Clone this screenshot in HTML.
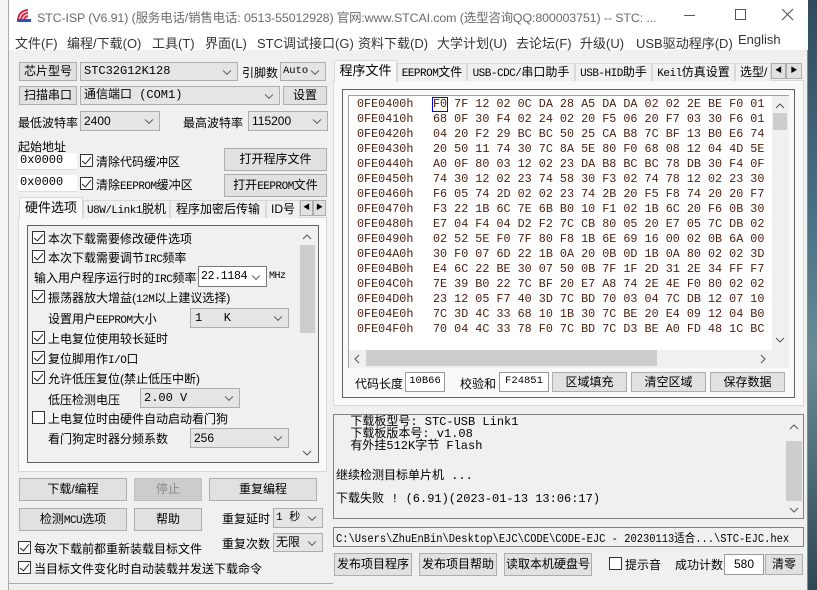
<!DOCTYPE html>
<html><head><meta charset="utf-8"><style>
*{box-sizing:border-box;margin:0;padding:0}
body{width:817px;height:590px;overflow:hidden;position:relative;background:#fff;font-family:"Liberation Sans","Noto Sans CJK SC",sans-serif;font-size:12px;color:#000}
.a{position:absolute;white-space:nowrap}
.win{position:absolute;left:8px;top:0;width:800px;height:590px;background:#f0f0f0;border-left:1px solid #aaa;border-right:1px solid #888}
.btn{position:absolute;background:#e1e1e1;border:1px solid #adadad;text-align:center;font-size:12px;white-space:nowrap}
.cb{position:absolute;background:#e5e5e5;border:1px solid #adadad;font-family:"Liberation Mono","Noto Sans CJK SC",monospace;font-size:12px;padding-left:3px;white-space:nowrap;overflow:hidden}
.cb::after{content:"";position:absolute;right:7px;top:50%;width:5px;height:5px;border-right:1px solid #555;border-bottom:1px solid #555;transform:translateY(-70%) rotate(45deg)}
.wcb{background:#fff;border-color:#7a7a7a}
.ed{position:absolute;background:#fff;border:1px solid #7a7a7a;font-family:"Liberation Mono",monospace;font-size:12px;padding-left:2px;white-space:nowrap}
.ck{position:absolute;width:13px;height:13px;border:1px solid #333;background:#fff}
.ck.on::after{content:"";position:absolute;left:3px;top:0px;width:4px;height:8px;border-right:1.5px solid #222;border-bottom:1.5px solid #222;transform:rotate(40deg)}
.tab{position:absolute;background:#f0f0f0;border:1px solid #d9d9d9;border-bottom:none;text-align:center;font-size:12px;white-space:nowrap;overflow:hidden}
.hex{position:absolute;font-family:"Liberation Mono",monospace;font-size:11.75px;color:#4a2010;white-space:pre;letter-spacing:0}
.lbl{position:absolute;font-size:12px;white-space:nowrap}
.mono{font-family:"Liberation Mono","Noto Sans CJK SC",monospace}
.m{font-family:"Liberation Mono",monospace;font-size:11px;letter-spacing:-0.5px}
</style></head><body>
<div class="a" style="left:0;top:0;width:8px;height:590px;background:#f4f4f4"></div>
<div class="a" style="left:808px;top:0;width:9px;height:590px;background:linear-gradient(#2f4a5e,#4d7488 40%,#6a8c98 60%,#2e4756)"></div>
<div class="win">
 <div class="a" style="left:0;top:0;width:799px;height:50px;background:#fff"></div>
</div>
<!-- title -->
<svg class="a" style="left:16px;top:7px" width="16" height="16" viewBox="0 0 16 16"><path d="M2 14 Q2 4 12 3" stroke="#e0284a" stroke-width="2" fill="none"/><path d="M5 14 Q5 7 12 6" stroke="#e0284a" stroke-width="2" fill="none"/><path d="M8 14 Q8 10 12 9" stroke="#e0284a" stroke-width="2" fill="none"/><rect x="1" y="12" width="14" height="3" fill="#2a52c0"/></svg>
<div class="a" style="left:37px;top:8px;font-size:12.4px;color:#6a6a6a;letter-spacing:-0.1px">STC-ISP (V6.91) (服务电话/销售电话: 0513-55012928) 官网:www.STCAI.com (选型咨询QQ:800003751) -- STC: ...</div>
<div class="a" style="left:684px;top:15px;width:11px;height:1px;background:#555"></div>
<div class="a" style="left:735px;top:9px;width:11px;height:11px;border:1px solid #555"></div>
<svg class="a" style="left:781px;top:8px" width="13" height="13"><path d="M1 1L12 12M12 1L1 12" stroke="#555" stroke-width="1.1"/></svg>
<!-- menu -->
<div class="a" style="left:15px;top:33px;font-size:13px;color:#333">
<span style="position:absolute;left:0">文件(F)</span><span style="position:absolute;left:52px">编程/下载(O)</span><span style="position:absolute;left:137px">工具(T)</span><span style="position:absolute;left:190px">界面(L)</span><span style="position:absolute;left:242px">STC调试接口(G)</span><span style="position:absolute;left:343px">资料下载(D)</span><span style="position:absolute;left:422px">大学计划(U)</span><span style="position:absolute;left:501px">去论坛(F)</span><span style="position:absolute;left:565px">升级(U)</span><span style="position:absolute;left:621px">USB驱动程序(D)</span><span style="position:absolute;left:723px;top:-1px">English</span></div>

<!-- left top -->
<div class="btn" style="left:19px;top:62px;width:58px;height:19px;line-height:17px">芯片型号</div>
<div class="cb" style="left:80px;top:62px;width:158px;height:19px;line-height:17px">STC32G12K128</div>
<div class="lbl" style="left:242px;top:64px">引脚数</div>
<div class="cb" style="left:280px;top:62px;width:46px;height:19px;line-height:17px;font-size:10.5px;padding-left:2px">Auto</div>
<div class="btn" style="left:19px;top:86px;width:58px;height:19px;line-height:17px">扫描串口</div>
<div class="cb" style="left:80px;top:86px;width:200px;height:19px;line-height:17px">通信端口 (COM1)</div>
<div class="btn" style="left:283px;top:86px;width:44px;height:19px;line-height:17px">设置</div>
<div class="lbl" style="left:18px;top:114px">最低波特率</div>
<div class="cb" style="left:80px;top:111px;width:80px;height:20px;line-height:18px;font-family:'Liberation Sans'">2400</div>
<div class="lbl" style="left:183px;top:114px">最高波特率</div>
<div class="cb" style="left:248px;top:111px;width:80px;height:20px;line-height:18px;font-family:'Liberation Sans'">115200</div>
<div class="lbl" style="left:18px;top:138px">起始地址</div>
<div class="ed" style="left:18px;top:153px;width:59px;height:17px;line-height:15px;border:none;border-bottom:1px solid #ddd">0x0000</div>
<div class="ck on" style="left:80px;top:154px"></div><div class="lbl" style="left:96px;top:153px">清除代码缓冲区</div>
<div class="btn" style="left:224px;top:148px;width:103px;height:23px;line-height:21px">打开程序文件</div>
<div class="ed" style="left:18px;top:175px;width:59px;height:17px;line-height:15px;border:none;border-bottom:1px solid #ddd">0x0000</div>
<div class="ck on" style="left:80px;top:177px"></div><div class="lbl" style="left:96px;top:176px">清除<span class="m">EEPROM</span>缓冲区</div>
<div class="btn" style="left:224px;top:174px;width:103px;height:23px;line-height:21px">打开<span class="m">EEPROM</span>文件</div>

<!-- left tabs -->
<div class="a" style="left:18px;top:217px;width:309px;height:255px;border:1px solid #d9d9d9;background:#f9f9f9"></div>
<div class="tab" style="left:83px;top:200px;width:87px;height:18px;line-height:17px"><span class="m">U8W/Link1</span>脱机</div>
<div class="tab" style="left:170px;top:200px;width:96px;height:18px;line-height:17px">程序加密后传输</div>
<div class="tab" style="left:266px;top:200px;width:34px;height:18px;line-height:17px;text-align:left;padding-left:4px">ID号</div>
<div class="tab" style="left:19px;top:197px;width:64px;height:22px;line-height:20px;background:#f9f9f9;font-size:13px">硬件选项</div>
<div class="btn" style="left:300px;top:200px;width:13px;height:16px;font-size:7px;line-height:14px">◀</div>
<div class="btn" style="left:313px;top:200px;width:13px;height:16px;font-size:7px;line-height:14px">▶</div>
<div class="a" style="left:27px;top:225px;width:292px;height:238px;border:1px solid #646464;background:#f0f0f0"></div>
<div class="a" style="left:299px;top:226px;width:19px;height:236px;background:#f0f0f0"></div>
<div class="a" style="left:300px;top:245px;width:15px;height:88px;background:#cdcdcd"></div>
<svg class="a" style="left:302px;top:234px" width="10" height="6"><path d="M1 5L5 1L9 5" stroke="#555" fill="none"/></svg>
<svg class="a" style="left:302px;top:450px" width="10" height="6"><path d="M1 1L5 5L9 1" stroke="#555" fill="none"/></svg>
<div class="ck on" style="left:32px;top:231px"></div><div class="lbl" style="left:48px;top:230px">本次下载需要修改硬件选项</div>
<div class="ck on" style="left:32px;top:250px"></div><div class="lbl" style="left:48px;top:249px">本次下载需要调节<span class="m">IRC</span>频率</div>
<div class="lbl" style="left:34px;top:269px">输入用户程序运行时的<span class="m">IRC</span>频率</div>
<div class="cb wcb" style="left:198px;top:266px;width:69px;height:21px;line-height:19px;font-size:11.5px;padding-left:2px;letter-spacing:-0.3px">22.1184</div>
<div class="lbl m" style="left:269px;top:271px;font-size:10px">MHz</div>
<div class="ck on" style="left:32px;top:290px"></div><div class="lbl" style="left:48px;top:289px">振荡器放大增益(<span class="m">12M</span>以上建议选择)</div>
<div class="lbl" style="left:48px;top:310px">设置用户<span class="m">EEPROM</span>大小</div>
<div class="cb" style="left:190px;top:308px;width:99px;height:20px;line-height:18px;padding-left:4px">1&nbsp;&nbsp;&nbsp;K</div>
<div class="ck on" style="left:32px;top:331px"></div><div class="lbl" style="left:48px;top:330px">上电复位使用较长延时</div>
<div class="ck on" style="left:32px;top:351px"></div><div class="lbl" style="left:48px;top:350px">复位脚用作<span class="m">I/O</span>口</div>
<div class="ck on" style="left:32px;top:371px"></div><div class="lbl" style="left:48px;top:370px">允许低压复位(禁止低压中断)</div>
<div class="lbl" style="left:48px;top:391px">低压检测电压</div>
<div class="cb" style="left:140px;top:388px;width:100px;height:20px;line-height:18px">2.00 V</div>
<div class="ck" style="left:32px;top:411px"></div><div class="lbl" style="left:48px;top:410px">上电复位时由硬件自动启动看门狗</div>
<div class="lbl" style="left:48px;top:430px">看门狗定时器分频系数</div>
<div class="cb" style="left:190px;top:428px;width:99px;height:20px;line-height:18px;font-family:'Liberation Sans'">256</div>

<div class="btn" style="left:19px;top:478px;width:108px;height:23px;line-height:21px">下载/编程</div>
<div class="btn" style="left:134px;top:478px;width:68px;height:23px;line-height:21px;background:#ccc;border-color:#bfbfbf;color:#8a8a8a">停止</div>
<div class="btn" style="left:209px;top:478px;width:108px;height:23px;line-height:21px">重复编程</div>
<div class="btn" style="left:19px;top:508px;width:108px;height:23px;line-height:21px">检测<span class="m">MCU</span>选项</div>
<div class="btn" style="left:134px;top:508px;width:68px;height:23px;line-height:21px">帮助</div>
<div class="lbl" style="left:222px;top:510px">重复延时</div>
<div class="cb" style="left:273px;top:508px;width:50px;height:20px;line-height:18px;font-size:11px;padding-left:2px">1 秒</div>
<div class="lbl" style="left:222px;top:535px">重复次数</div>
<div class="cb" style="left:273px;top:533px;width:50px;height:19px;line-height:17px;font-family:'Liberation Sans','Noto Sans CJK SC';padding-left:2px">无限</div>
<div class="ck on" style="left:18px;top:541px"></div><div class="lbl" style="left:34px;top:540px">每次下载前都重新装载目标文件</div>
<div class="ck on" style="left:18px;top:561px"></div><div class="lbl" style="left:34px;top:560px">当目标文件变化时自动装载并发送下载命令</div>
<div class="a" style="left:8px;top:583px;width:325px;height:1px;background:#aaa"></div>

<!-- right tabs -->
<div class="a" style="left:333px;top:80px;width:471px;height:326px;background:#f9f9f9;border:1px solid #d9d9d9"></div>
<div class="tab" style="left:397px;top:63px;width:70px;height:18px;line-height:17px"><span class="m">EEPROM</span>文件</div>
<div class="tab" style="left:467px;top:63px;width:108px;height:18px;line-height:17px"><span class="m">USB-CDC/</span>串口助手</div>
<div class="tab" style="left:575px;top:63px;width:77px;height:18px;line-height:17px"><span class="m">USB-HID</span>助手</div>
<div class="tab" style="left:652px;top:63px;width:83px;height:18px;line-height:17px"><span class="m">Keil</span>仿真设置</div>
<div class="tab" style="left:735px;top:63px;width:36px;height:18px;line-height:17px;text-align:left;padding-left:4px">选型/</div>
<div class="tab" style="left:334px;top:60px;width:63px;height:22px;line-height:20px;background:#f9f9f9;font-size:13px">程序文件</div>
<div class="btn" style="left:771px;top:63px;width:15px;height:16px;font-size:7px;line-height:14px">◀</div>
<div class="btn" style="left:786px;top:63px;width:16px;height:16px;font-size:7px;line-height:14px">▶</div>
<div class="a" style="left:342px;top:89px;width:453px;height:309px;border:1px solid #646464"></div>
<div class="a" style="left:348px;top:95px;width:441px;height:273px;background:#fff;border-top:1px solid #a0a0a0;border-left:1px solid #a0a0a0"></div>
<div class="a" style="left:772px;top:96px;width:17px;height:272px;background:#f0f0f0"></div>
<div class="a" style="left:773px;top:113px;width:14px;height:17px;background:#cdcdcd"></div>
<svg class="a" style="left:775px;top:103px" width="10" height="6"><path d="M1 5L5 1L9 5" stroke="#555" fill="none"/></svg>
<svg class="a" style="left:775px;top:337px" width="10" height="6"><path d="M1 1L5 5L9 1" stroke="#555" fill="none"/></svg>
<div class="a" style="left:349px;top:350px;width:423px;height:18px;background:#f0f0f0"></div>
<div class="a" style="left:366px;top:350px;width:291px;height:16px;background:#cdcdcd"></div>
<svg class="a" style="left:354px;top:354px" width="6" height="10"><path d="M5 1L1 5L5 9" stroke="#555" fill="none"/></svg>
<svg class="a" style="left:760px;top:354px" width="6" height="10"><path d="M1 1L5 5L1 9" stroke="#555" fill="none"/></svg>
<div class="a" style="left:432px;top:97px;width:16px;height:15px;border:1px solid #0000ff"></div>
<div class="hex" style="left:357px;top:97px;line-height:15px">0FE0400h
0FE0410h
0FE0420h
0FE0430h
0FE0440h
0FE0450h
0FE0460h
0FE0470h
0FE0480h
0FE0490h
0FE04A0h
0FE04B0h
0FE04C0h
0FE04D0h
0FE04E0h
0FE04F0h</div>
<div class="hex" style="left:433px;top:97px;line-height:15px;word-spacing:0">F0 7F 12 02 0C DA 28 A5 DA DA 02 02 2E BE F0 01
68 0F 30 F4 02 24 02 20 F5 06 20 F7 03 30 F6 01
04 20 F2 29 BC BC 50 25 CA B8 7C BF 13 B0 E6 74
20 50 11 74 30 7C 8A 5E 80 F0 68 08 12 04 4D 5E
A0 0F 80 03 12 02 23 DA B8 BC BC 78 DB 30 F4 0F
74 30 12 02 23 74 58 30 F3 02 74 78 12 02 23 30
F6 05 74 2D 02 02 23 74 2B 20 F5 F8 74 20 20 F7
F3 22 1B 6C 7E 6B B0 10 F1 02 1B 6C 20 F6 0B 30
E7 04 F4 04 D2 F2 7C CB 80 05 20 E7 05 7C DB 02
02 52 5E F0 7F 80 F8 1B 6E 69 16 00 02 0B 6A 00
30 F0 07 6D 22 1B 0A 20 0B 0D 1B 0A 80 02 02 3D
E4 6C 22 BE 30 07 50 0B 7F 1F 2D 31 2E 34 FF F7
7E 39 B0 22 7C BF 20 E7 A8 74 2E 4E F0 80 02 02
23 12 05 F7 40 3D 7C BD 70 03 04 7C DB 12 07 10
7C 3D 4C 33 68 10 1B 30 7C BE 20 E4 09 12 04 B0
70 04 4C 33 78 F0 7C BD 7C D3 BE A0 FD 48 1C BC</div>
<div class="lbl" style="left:355px;top:375px">代码长度</div>
<div class="ed" style="left:405px;top:372px;width:40px;height:20px;line-height:17px;font-size:10.5px;text-align:center;border-color:#999;padding:0">10B66</div>
<div class="lbl" style="left:460px;top:375px">校验和</div>
<div class="ed" style="left:499px;top:372px;width:50px;height:20px;line-height:17px;font-size:10.5px;text-align:center;border-color:#999;padding:0">F24851</div>
<div class="btn" style="left:552px;top:372px;width:75px;height:20px;line-height:18px">区域填充</div>
<div class="btn" style="left:631px;top:372px;width:75px;height:20px;line-height:18px">清空区域</div>
<div class="btn" style="left:710px;top:372px;width:75px;height:20px;line-height:18px">保存数据</div>

<!-- log -->
<div class="a" style="left:333px;top:414px;width:471px;height:105px;border:1px solid #828282;background:#f0f0f0"></div>
<div class="a" style="left:786px;top:415px;width:17px;height:103px;background:#f0f0f0"></div>
<div class="a" style="left:786px;top:441px;width:16px;height:60px;background:#cdcdcd"></div>
<svg class="a" style="left:789px;top:424px" width="10" height="6"><path d="M1 5L5 1L9 5" stroke="#555" fill="none"/></svg>
<svg class="a" style="left:789px;top:507px" width="10" height="6"><path d="M1 1L5 5L9 1" stroke="#555" fill="none"/></svg>
<div class="a mono" style="left:336px;top:416px;font-size:12px;line-height:12px">&nbsp;&nbsp;下载板型号: STC-USB Link1<br>&nbsp;&nbsp;下载板版本号: v1.08<br>&nbsp;&nbsp;有外挂512K字节 Flash</div>
<div class="a mono" style="left:336px;top:466px;font-size:12px">继续检测目标单片机 ...</div>
<div class="a mono" style="left:336px;top:489px;font-size:12px">下载失败 ! (6.91)(2023-01-13 13:06:17)</div>
<div class="a" style="left:333px;top:527px;width:471px;height:20px;border:1px solid #828282;background:#f0f0f0"></div>
<div class="a mono" style="left:336px;top:529px;font-size:12px;transform:scaleX(0.87);transform-origin:left">C:\Users\ZhuEnBin\Desktop\EJC\CODE\CODE-EJC - 20230113适合...\STC-EJC.hex</div>
<div class="btn" style="left:334px;top:553px;width:78px;height:23px;line-height:21px">发布项目程序</div>
<div class="btn" style="left:419px;top:553px;width:78px;height:23px;line-height:21px">发布项目帮助</div>
<div class="btn" style="left:504px;top:553px;width:88px;height:23px;line-height:21px">读取本机硬盘号</div>
<div class="ck" style="left:609px;top:557px"></div><div class="lbl" style="left:625px;top:556px">提示音</div>
<div class="lbl" style="left:675px;top:556px">成功计数</div>
<div class="ed" style="left:724px;top:554px;width:40px;height:21px;line-height:18px;text-align:center;font-family:'Liberation Sans';border-color:#999;padding:0">580</div>
<div class="btn" style="left:765px;top:554px;width:38px;height:21px;line-height:19px">清零</div>
</body></html>
